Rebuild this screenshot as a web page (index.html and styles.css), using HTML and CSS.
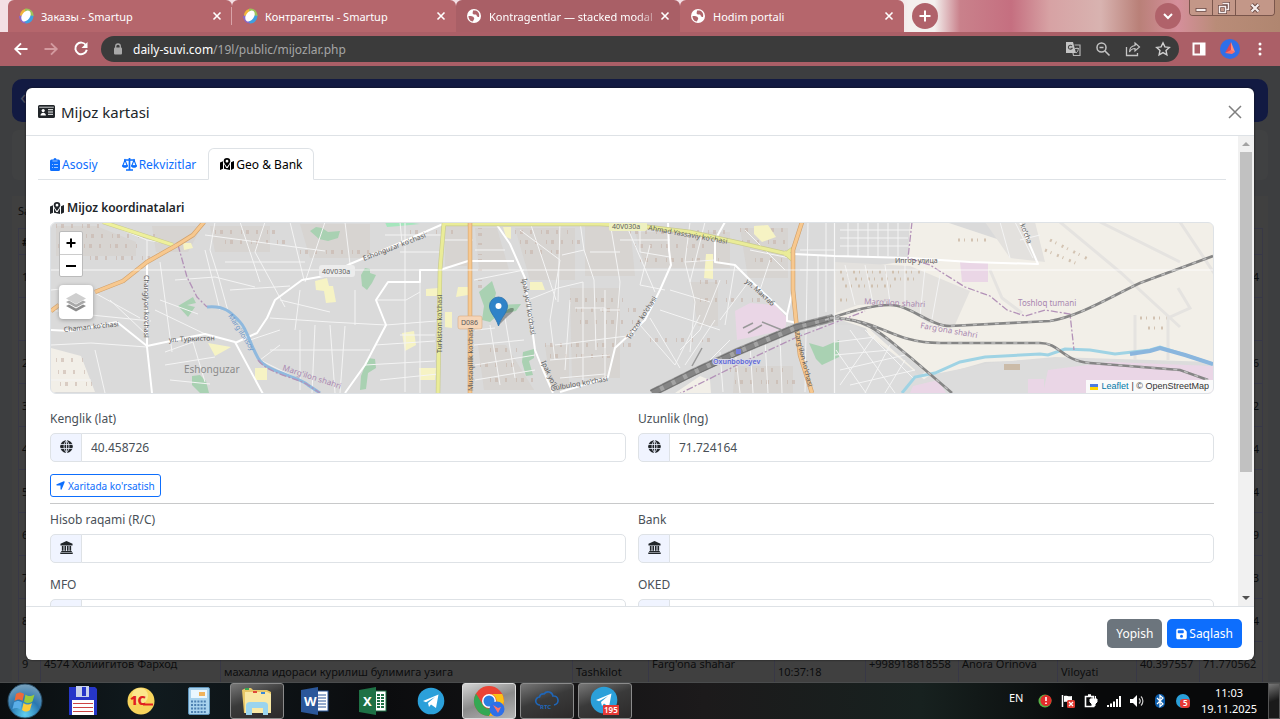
FILE: index.html
```html
<!DOCTYPE html>
<html lang="uz">
<head>
  <meta charset="UTF-8" />
  <meta name="viewport" content="width=device-width, initial-scale=1.0"/>
  <title>Mijozlar</title>
  <link rel="stylesheet" href="styles.css">
</head>
<body>

  <!-- shared icons -->
  <svg class="sprite" width="0" height="0">
    <symbol id="i-close" viewBox="0 0 10 10"><path d="M1.500 1.500l7 7M8.500 1.500l-7 7" stroke="currentColor" stroke-width="1.600" fill="none"/></symbol>
    <symbol id="i-smartup" viewBox="0 0 16 16">
      <path d="M2 9A7 7 0 0 1 7 1l4 0L5 12z" fill="#f0b53a"/>
      <path d="M1 8c0 4 3 7.500 7 7.500l2-3-6-5z" fill="#8a68c8"/>
      <path d="M8 15.500c5 0 7.500-4 7.500-8.500l-3.500-1-6 6z" fill="#3f9fe0"/>
      <path d="M7 .7c4-1 8.500 2 8.500 7.300l-4.500-1-4-4z" fill="#9cc35a"/>
      <ellipse cx="8" cy="8" rx="4" ry="6" transform="rotate(35 8 8)" fill="#fff"/>
    </symbol>
    <symbol id="i-world" viewBox="0 0 16 16">
      <circle cx="8" cy="8" r="7" fill="#fff"/>
      <path d="M2.500 8c2 0 5 0 5.500 2 1 1-1 2-1 3.500-3 0-4.500-3-4.500-5.500zM7 2.500c0 2-1 2.500 0 3.500s3 0 3.500 1 0 2 2.500 2c1-3-1-6-3.500-6.500z" fill="#b0656c"/>
    </symbol>
    <symbol id="i-map" viewBox="0 0 14 12">
      <path d="M0 4.500L3 3.300v7.500L0 12zM11 4.300L14 3v7.600L11 12zM4 6l2.200 4h1.600L10 6v6l-6-1.200z" fill="currentColor"/>
      <path d="M7 0a3.300 3.300 0 0 0-3.300 3.300C3.700 5 7 9 7 9s3.300-4 3.300-5.700A3.300 3.300 0 0 0 7 0zm0 4.600a1.400 1.400 0 1 1 0-2.800 1.400 1.400 0 0 1 0 2.800z" fill="currentColor" fill-rule="evenodd"/>
    </symbol>
    <symbol id="i-globe" viewBox="0 0 14 14">
      <circle cx="7" cy="7" r="6.800" fill="#212529"/>
      <path d="M0 4.800h14M0 9.200h14M7 0v14M7 .5C3.500 3.500 3.500 10.500 7 13.500M7 .5c3.500 3 3.500 10 0 13" stroke="#eef3ff" stroke-width=".9" fill="none"/>
    </symbol>
    <symbol id="i-bank" viewBox="0 0 14 14">
      <path d="M7 0l6.500 3v1.800H.5V3zM2 5.400h1.800v5.200H2zM4.800 5.400h1.700v5.200H4.800zM7.500 5.400h1.700v5.200H7.500zM10.200 5.400H12v5.200h-1.800zM1.300 10.900h11.400v1H1.300zM.3 12.300h13.400V14H.3z" fill="#212529"/>
    </symbol>
    <symbol id="i-telegram" viewBox="0 0 28 28">
      <circle cx="14" cy="14" r="13.300" fill="#2ba0da"/>
      <path d="M6 14L21.500 7.500 19 21l-5-3.500-2 2.500-1-4 7-6-9 5.200z" fill="#fff"/>
    </symbol>
  </svg>

  <div class="tabstrip">
    <div class="tab tab-line">
      <svg width="16" height="16"><use href="#i-smartup"/></svg>
      <span class="tab-title">Заказы - Smartup</span>
      <button class="tab-close" aria-label="Close tab"><svg width="10" height="10"><use href="#i-close"/></svg></button>
    </div>
    <div class="tab">
      <svg width="16" height="16"><use href="#i-smartup"/></svg>
      <span class="tab-title">Контрагенты - Smartup</span>
      <button class="tab-close" aria-label="Close tab"><svg width="10" height="10"><use href="#i-close"/></svg></button>
    </div>
    <div class="tab tab-active">
      <svg width="16" height="16"><use href="#i-world"/></svg>
      <span class="tab-title tab-fade">Kontragentlar — stacked modal (</span>
      <button class="tab-close" aria-label="Close tab"><svg width="10" height="10"><use href="#i-close"/></svg></button>
    </div>
    <div class="tab">
      <svg width="16" height="16"><use href="#i-world"/></svg>
      <span class="tab-title">Hodim portali</span>
      <button class="tab-close" aria-label="Close tab"><svg width="10" height="10"><use href="#i-close"/></svg></button>
    </div>
    <button class="round-btn" aria-label="New tab"><svg width="14" height="14" viewBox="0 0 14 14"><path d="M7 1.500v11M1.500 7h11" stroke="#fff" stroke-width="2"/></svg></button>
    <button class="round-btn tab-search" aria-label="Search tabs"><svg width="12" height="12" viewBox="0 0 12 12"><path d="M2 4l4 4 4-4" fill="none" stroke="#fff" stroke-width="2"/></svg></button>
    <div class="win-controls">
      <button aria-label="Minimize"><svg width="12" height="12" viewBox="0 0 12 12"><rect x="1" y="6.500" width="10" height="3" fill="#f5eded" stroke="#6b4a44" stroke-width=".8"/></svg></button>
      <button aria-label="Restore"><svg width="12" height="12" viewBox="0 0 12 12"><path d="M4.500 1.500h6v6h-2M1.500 4.500h6v6h-6z" fill="none" stroke="#6b4a44" stroke-width="3"/><path d="M4.500 1.500h6v6h-2M1.500 4.500h6v6h-6z" fill="none" stroke="#f5eded" stroke-width="1.500"/></svg></button>
      <button class="win-x" aria-label="Close"><svg width="12" height="12" viewBox="0 0 12 12"><path d="M2.500 2.500l7 7m0-7l-7 7" stroke="#6b4a44" stroke-width="4"/><path d="M2.500 2.500l7 7m0-7l-7 7" stroke="#f5eded" stroke-width="2.200"/></svg></button>
    </div>
  </div>

  <div class="toolbar">
    <button aria-label="Back"><svg width="16" height="16" viewBox="0 0 16 16"><path d="M14.500 8H2.500M8 2.300L2.300 8 8 13.700" fill="none" stroke="#fff" stroke-width="1.900"/></svg></button>
    <button aria-label="Forward"><svg width="16" height="16" viewBox="0 0 16 16"><path d="M1.500 8h12M8 2.300L13.700 8 8 13.700" fill="none" stroke="#d39a9f" stroke-width="1.900"/></svg></button>
    <button aria-label="Reload"><svg width="16" height="16" viewBox="0 0 16 16"><path d="M13 4.200A5.800 5.800 0 1 0 13.800 8.800" fill="none" stroke="#fff" stroke-width="2"/><path d="M14.500 1v6H8.500z" fill="#fff"/></svg></button>
    <div class="omnibox">
      <svg width="10" height="12" viewBox="0 0 10 12"><path d="M2.700 5V3.300a2.300 2.300 0 0 1 4.600 0V5" fill="none" stroke="#a9a9a9" stroke-width="1.300"/><rect x="1" y="4.500" width="8" height="7" rx="1" fill="#a9a9a9"/></svg>
      <button class="url">daily-suvi.com<span>/19l/public/mijozlar.php</span></button>
      <button aria-label="Translate"><svg width="16" height="16" viewBox="0 0 16 16"><path d="M1 1h7l3 11H1z" fill="#c4c4c4"/><path d="M9.500 4H15v10.500H8.500L8 12" fill="none" stroke="#b4b4b4" stroke-width="1.200"/><path d="M7 5a2 2 0 1 0 .2 2.200H5.500" fill="none" stroke="#444" stroke-width="1.100"/><path d="M10 7.500h4M12 6.500v1M11 12c1.500-1 2.200-2.500 2.300-4.300" fill="none" stroke="#b4b4b4" stroke-width="1"/></svg></button>
      <button aria-label="Zoom"><svg width="16" height="16" viewBox="0 0 16 16"><circle cx="6.500" cy="6.500" r="4.500" fill="none" stroke="#c4c4c4" stroke-width="1.500"/><path d="M10 10l4.500 4.500M4.500 6.500h4" stroke="#c4c4c4" stroke-width="1.600"/></svg></button>
      <button aria-label="Share"><svg width="16" height="16" viewBox="0 0 16 16"><path d="M1.500 6v8.500h11V12" fill="none" stroke="#c4c4c4" stroke-width="1.300"/><path d="M10 2l4.500 4-4.500 4V7.500C7 7.500 5.500 9 4.500 11c0-4 2-6 5.500-6.500z" fill="none" stroke="#c4c4c4" stroke-width="1.200"/></svg></button>
      <button aria-label="Bookmark"><svg width="16" height="16" viewBox="0 0 16 16"><path d="M8 1.800l1.900 4.100 4.400.5-3.300 3 .9 4.400L8 11.600l-3.900 2.200.9-4.400-3.300-3 4.400-.5z" fill="none" stroke="#d0d0d0" stroke-width="1.400"/></svg></button>
    </div>
    <button aria-label="Side panel"><svg width="14" height="14" viewBox="0 0 14 14"><path d="M0.500 .5h13v13H.5zM2.500 2.500v9H8v-9z" fill="#fff" fill-rule="evenodd"/></svg></button>
    <button aria-label="Profile"><svg width="20" height="20" viewBox="0 0 20 20"><circle cx="10" cy="10" r="10" fill="#2f6fe8"/><path d="M11 3l4 10-4-1z" fill="#ff8d7a"/><path d="M11 3l0 9-6 2z" fill="#d8455a"/><path d="M5 14l6-3 4 2-3 2z" fill="#ff6f61"/></svg></button>
    <button class="menu-dots" aria-label="Menu"><svg width="4" height="14" viewBox="0 0 4 14" fill="#fff"><circle cx="2" cy="2" r="1.500"/><circle cx="2" cy="7" r="1.500"/><circle cx="2" cy="12" r="1.500"/></svg></button>
  </div>

  <main class="page">
    <div class="navbar"><span>‹</span></div>
    <div class="filter-card"></div>
    <div class="list-card">
      <div class="list-title">Savdo</div>
      <table class="clients">
        <colgroup>
          <col class="c-num"><col class="c-name"><col><col class="c-type"><col class="c-city"><col class="c-time"><col class="c-phone"><col class="c-agent"><col class="c-region"><col class="c-lat"><col class="c-lat">
        </colgroup>
        <tr><th>#</th><th></th><th></th><th></th><th></th><th></th><th></th><th></th><th></th><th></th><th></th></tr>
        <tr><td>1</td><td></td><td></td><td></td><td></td><td></td><td></td><td></td><td></td><td></td><td class="r">4</td></tr>
        <tr><td></td><td></td><td></td><td></td><td></td><td></td><td></td><td></td><td></td><td></td><td></td></tr>
        <tr><td>2</td><td></td><td></td><td></td><td></td><td></td><td></td><td></td><td></td><td></td><td class="r">6</td></tr>
        <tr><td>3</td><td></td><td></td><td></td><td></td><td></td><td></td><td></td><td></td><td></td><td class="r">2</td></tr>
        <tr><td>4</td><td></td><td></td><td></td><td></td><td></td><td></td><td></td><td></td><td></td><td class="r">4</td></tr>
        <tr><td>5</td><td></td><td></td><td></td><td></td><td></td><td></td><td></td><td></td><td></td><td class="r">4</td></tr>
        <tr><td>6</td><td></td><td></td><td></td><td></td><td></td><td></td><td></td><td></td><td></td><td class="r">9</td></tr>
        <tr><td>7</td><td></td><td></td><td></td><td></td><td></td><td></td><td></td><td></td><td></td><td class="r">3</td></tr>
        <tr><td>8</td><td></td><td></td><td></td><td></td><td></td><td></td><td></td><td></td><td></td><td class="r">4</td></tr>
        <tr><td>9</td><td>4574 Холиигитов Фарход</td><td><br>махалла идораси курилиш булимига узига</td><td><br>Tashkilot</td><td>Farg'ona shahar</td><td><br>10:37:18</td><td>+998918818558</td><td>Anora Orinova</td><td><br>Viloyati</td><td>40.397557</td><td>71.770562</td></tr>
      </table>
    </div>

    <div class="modal">
      <div class="modal-header">
        <svg width="17" height="13" viewBox="0 0 17 13"><path d="M1.500 0h14A1.500 1.500 0 0 1 17 1.500v10a1.500 1.500 0 0 1-1.500 1.500h-14A1.500 1.500 0 0 1 0 11.500v-10A1.500 1.500 0 0 1 1.500 0z" fill="#212529"/><path d="M1.200 2.200h14.600" stroke="#fff" stroke-width=".8"/><circle cx="5.200" cy="5.600" r="1.600" fill="#fff"/><path d="M2.500 10.500c0-3.600 5.400-3.600 5.400 0z" fill="#fff"/><path d="M10 4.700h5M10 7h5M10 9.300h5" stroke="#fff" stroke-width="1"/></svg>
        <h5>Mijoz kartasi</h5>
        <button class="modal-close" aria-label="Yopish"><svg width="14" height="14" viewBox="0 0 14 14"><path d="M1 1l12 12M13 1L1 13" stroke="#7f7f7f" stroke-width="1.500"/></svg></button>
      </div>

      <div class="modal-main">
        <div class="modal-body">
          <nav class="nav-tabs">
            <a href="#asosiy"><svg width="10" height="13" viewBox="0 0 10 13"><path d="M1.500 1.500h2a1.500 1.500 0 0 1 3 0h2A1.500 1.500 0 0 1 10 3v8.500A1.500 1.500 0 0 1 8.500 13h-7A1.500 1.500 0 0 1 0 11.500V3a1.500 1.500 0 0 1 1.500-1.500z" fill="currentColor"/><path d="M2.500 3h5M4 6.500h4M4 9.500h4M2 6.500h1M2 9.500h1" stroke="#fff" stroke-width=".6"/></svg>Asosiy</a>
            <a href="#rekvizitlar"><svg width="15" height="13" viewBox="0 0 15 13"><path d="M7.500 0v12M2 2h11M4 12h7" stroke="currentColor" stroke-width="1.700"/><path d="M3 2L.7 8h4.600zM12 2L9.700 8h4.600z" fill="none" stroke="currentColor" stroke-width="1.100"/><path d="M0 7.200h6c0 3.500-6 3.500-6 0zM9 7.200h6c0 3.500-6 3.500-6 0z" fill="currentColor"/></svg>Rekvizitlar</a>
            <a href="#geo" class="active"><svg width="14" height="12"><use href="#i-map"/></svg>Geo &amp; Bank</a>
          </nav>

          <div class="tab-pane">
            <h6><svg width="14" height="12"><use href="#i-map"/></svg>Mijoz koordinatalari</h6>

            <div class="map">
              <svg class="map-tiles" viewBox="51 222 1162 172" preserveAspectRatio="xMidYMid slice">
                <rect x="51" y="222" width="1162" height="172" fill="#dadada"/>
                <!-- open land -->
                <g fill="#f2efe8">
                  <path d="M910 222L946 222 1000 240 1010 222H1213V366L1110 362 1040 360 985 362 940 375 905 393 898 393 925 372 905 355 880 333 835 318V272L900 262 908 256z"/>
                  <path d="M51 348l30 8 14 36H51zM675 393l25-17 10 4 1 13zM865 325l50 45-12 23-30-45z"/>
                </g>
                <g fill="#e3e1de">
                  <path d="M835 262l75 4 60 25-16 36-26-4-30-20-40 2-22 8zM985 222h50l10 40-35-4z"/>
                </g>
                <g fill="#dcdcdc">
                  <path d="M835 325l20 0 45 34 40 34H835zM905 393l25-18 60-12 65-6 158 5v31z"/>
                </g>
                <!-- built-up areas -->
                <g fill="#d3cbc5" opacity=".45">
                  <path d="M152 226h50l-14 26h-32zM210 226h60v26h-55zM300 224h70v34h-60zM445 226h22v40h-22zM475 228h22l12 42h-30zM515 228h60v52h-45zM585 226h45l5 50h-50zM570 288h50v90h-48zM545 345h24v46h-18zM635 232h95v36h-85zM740 228h48v50h-40zM735 366h58v27h-60zM690 282h28v44h-20zM478 345h28l28 45h-50zM56 226h40l40 16v14H56z"/>
                </g>
                <g stroke="#c8b5aa" stroke-width="4" stroke-dasharray="1 4 3 7 2 9" opacity=".6">
                  <path d="M56 226h50M60 236h100M58 246h80M90 258h60M300 252h90M215 232h60M225 242h60M56 360h30M58 372h30M60 384h32M410 232h50M480 228v60M515 232h55M520 242h60M525 252h40M570 300h55M576 310h60M580 322h60M545 345h90M550 356h60M490 350h30M480 365h40M490 380h45M630 232h100M635 246h70M640 260h80M650 340h60M700 300h60M740 230h50M742 242h50M755 260h30M700 282h30M730 370h55M735 382h60"/>
                </g>
                <g stroke="#cbb8a4" stroke-width="3" stroke-dasharray="2 4 1 6" opacity=".8">
                  <path d="M840 272h80M842 279h75M845 286h50M840 300h12M958 240h30M1050 240l40 20M1045 250l35 15M1140 318h30M1148 328h20"/>
                </g>
                <!-- parks -->
                <g fill="#a9d1b2">
                  <path d="M310 231l6-4 6 1 6 4 12-1-2 7-10 3-9-2zM361 275l4-7 5 1v4l6 2-4 8-5 7-5-4zM178 306l15-9 3 6-9 2 8 2-7 10zM192 376l8-1 6 6 3 12h-9l-8-8zM368 358l7 1 1 9-8 5-2 16-6 1 1-14z"/>
                  <path d="M479 292l13-11 4 12-3 12 28-1-5 7-18 4-8 7-8-2 2-14zM523 352l11-3v9l-5 3 4 14-7 1-4-14zM809 343l14 4 16-7v17l-17 8-6-6z"/>
                </g>
                <path d="M385 222h20l15 2-20 2-13 1z" fill="#a5e6bd"/>
                <!-- schools -->
                <g fill="#f6f3c4">
                  <path d="M208 343l23 4-16 9zM315 281l12-3 2 8 4 0 3 16-10 1-2-12-8-1zM183 243h8l2 5-9 2zM255 368h12v12h-12zM426 289l12-1v8h-12zM458 287h10v8l-12 2zM445 312l7 0v16l-7-1zM402 333l12-2 2 14-11 6zM419 368l17 0-1 12h-15zM530 282h12l3 8h-15zM503 227h8v12l-5-2zM754 226l14-1 8 12-14 5-8-8zM706 254h7l0 25-9-1z"/>
                </g>
                <g fill="#ead6e6">
                  <path d="M735 311l15-8 25 2 12 13-2 12-48 10zM960 262h28v20h-26zM1048 370l62-8 103 4v27H1043zM1028 379h16v14h-16zM913 386l25-6 8 13h-36z"/>
                </g>
                <!-- side streets -->
                <g fill="none" stroke="#f4f4f4" stroke-width="1">
                  <path d="M103 222l44 18 0 22M147 240l30 5M51 290l20-2M95 293l45 25M160 262l12 90M175 280l40-3 40 10M205 250l15 60M205 235l120 16M215 222l-5 28 8 25 10 36M240 222l20 60M265 222l-10 30 30 55M290 222l14 58M325 222l-20 60M345 222l5 42M400 222l2 21M225 262h80M230 290l60-4M51 310l20 3 80 8M110 300l37 35M155 310l25 12 25 12M160 300l38 14M165 352l28-10 12 40M51 345l40-2 56 4M95 350l10 43M51 380h40M165 365l50-8M170 380l40 4M270 318l60 4 56 3M280 300l50 12M300 330v60M270 350h100M315 325l-3 68M330 325l5 68M345 326l-5 67M355 290l0 35M250 340l30-10M280 345l-20 15 40 20M300 290l-5 40"/>
                  <path d="M376 300h30l14-8M386 325l50-4M400 335h35M405 222v170M420 270v123M375 345l60-4M365 365l70-4M380 380l58-6M385 235h58M400 252h40M443 240l30 0M475 250h30M474 280l50-10M474 345l50-5M475 330l20-2M475 365l60-10M490 325l10 60M505 318l10 60M475 380l60-10M528 300l30-12 25-6M520 230l40 30M531 225l25 75M560 260l-10 60 5 40M560 222l-2 80M580 222l4 28-22 5M583 282v100M584 250l10 30 2 70M555 345l80-10M550 360l60-5M570 300l-5 70M600 310h20M590 252h30M610 222l10 60-5 66M620 240h50M625 222l30 70M640 222l0 30 30 5M650 245l-10 40 25 5M575 308h30v70M605 290l0 58M560 378l45-4"/>
                  <path d="M690 222l-5 40 10 40-5 50M705 222l-15 60M685 262l30-2M720 280l-20 50-20 20M735 265l-10 60M750 280l-30 40M770 260l-10 30M745 230l40 40M790 258l-40-8M800 250h35M800 270h35M808 222l-3 170M818 255v75M826 222v90M670 290l40 12M660 310l60 20M640 325l35 40M650 318l30 50M700 315l-25 50M715 320l-30 45M730 340l-20 20M720 352l3 40M735 350l5 43M750 345l3 48M765 340l3 53M780 335l2 58"/>
                  <path d="M840 230h70M840 238h68M840 246h68M848 222v34M858 222v34M868 222v34M878 222v34M888 222v34M898 222v34M835 342l40-5M835 355l55-5M840 370l65-15M850 385l65-15M850 330l45 63M865 330l50 50M836 350l30 43M875 335l-35 50M890 345l-25 48M905 360l-20 33M1000 222l10 36M1015 222l18 36M1020 240l20-5M845 265l10 40M865 265l8 38M885 265l5 38M905 265l0 40M925 268l-5 48M940 275l-8 44"/>
                </g>
                <g fill="none" stroke="#e5e3e0" stroke-width="3">
                  <path d="M1060 222l60 50 60 55M1100 222l80 40M1180 222l40 60M990 270l12 28 20 15M1135 360v-45M1168 360v-42l22-10-12-20"/>
                </g>
                <!-- local roads -->
                <g fill="none" stroke="#fff" stroke-width="2" stroke-linejoin="round">
                  <path d="M51 330l20 1 46-9 30 24 33-7 25-5 30 8 28 52M235 343l22-10 10-15 8-18 27-20 28-5 20-11 50-21 43-19M147 262v85l5 46M403 282h-15l-12 18 10 25-21 40-20 28M400 282h20v-12h20l28-9h46"/>
                  <path d="M495 222l15 22 15 34 6 42 4 30 8 20 10 23M668 222l1 28 2 15-11 25-15 30-30 28-7 29-18 6-30 9M725 222l-10 18v22l20 3 15 15 37 35v6l11 2M787 315l6-26M793 254l42 2M835 256l75 2 60 4 68 2-18-42"/>
                </g>
                <!-- water -->
                <path d="M207 307c20-2 26 8 33 15s10 22 18 36 40 18 50 27l12 8" fill="none" stroke="#8fb9de" stroke-width="3"/>
                <path d="M902 393l13-16 20-4 25-11 25-5 55-3 8 1 17-6 25 1 25 4 35-4 10-3 25 8 28 9" fill="none" stroke="#9fd3e4" stroke-width="3"/>
                <path d="M1130 354l20-3 10-3 25 7 28 9" fill="none" stroke="#8ab6de" stroke-width="4"/>
                <!-- city borders -->
                <g fill="none" stroke="#b392b8" stroke-width="1.300" stroke-dasharray="7 2 2 2">
                  <path d="M178 245l9 32 10 20 10 10M258 360c10 14 40 18 50 25l12 8M912 222l-4 36 22 7 35 22 25 9 17 14 18 6 20-6 25 4 4 36M675 396l60-30 60-28 70-27"/>
                </g>
                <!-- main roads -->
                <g fill="none" stroke-linejoin="round">
                  <path d="M103 222l70 23" stroke="#c9cb8e" stroke-width="4"/>
                  <path d="M103 222l70 23" stroke="#eef09b" stroke-width="3"/>
                  <path d="M443 224h157l40 2 50 6 50 11 52 12M444 222l-4 48-2 123M784 252l9 8M784 255l10-7" stroke="#c9cb8e" stroke-width="4.500"/>
                  <path d="M443 224h157l40 2 50 6 50 11 52 12M444 222l-4 48-2 123M784 252l9 8M784 255l10-7" stroke="#eaec98" stroke-width="3.200"/>
                  <path d="M51 311l8-6M95 292l28-11 24-19 30-17 16-10 11-13M470 222v171M802 222l-9 28v40l4 40 3 25 12 38" stroke="#d3a26c" stroke-width="4.500"/>
                  <path d="M51 311l8-6M95 292l28-11 24-19 30-17 16-10 11-13M470 222v171M802 222l-9 28v40l4 40 3 25 12 38" stroke="#f7c88f" stroke-width="3.200"/>
                </g>
                <!-- railway -->
                <g fill="none">
                  <path d="M652 393l40-20 45-21 60-25 36-9" stroke="#a4a4a4" stroke-width="8"/>
                  <path d="M652 393l40-20 45-21 60-25 36-9" stroke="#858585" stroke-width="7" stroke-dasharray="9 4"/>
                  <path d="M650 391l40-20 45-21 60-25 38-9M655 395l40-20 45-21 60-25 33-9" stroke="#6f6f6f" stroke-width="1"/>
                  <path d="M825 320c25-8 45-15 65-15s40 21 60 21l100-5c30-5 60-24 90-38l73-27M830 318c50 0 60 25 110 25h100c20 0 22 18 50 20l90 7 28 10M835 318c35 2 45 15 75 39l42 36" stroke="#858585" stroke-width="2.600"/>
                  <path d="M825 320c25-8 45-15 65-15s40 21 60 21l100-5c30-5 60-24 90-38l73-27M830 318c50 0 60 25 110 25h100c20 0 22 18 50 20l90 7 28 10M835 318c35 2 45 15 75 39l42 36" stroke="#bdbdbd" stroke-width="1.400" stroke-dasharray="4 7"/>
                  <path d="M743 328l10-5M748 333l14-8M762 322l20 8M692 366l10-18" stroke="#999" stroke-width="1.500"/>
                </g>
                <!-- tile seams -->
                <path d="M51 270h1162M834.500 222v171" stroke="#fff" stroke-width="1.200" opacity=".75"/>
                <rect x="1004" y="364" width="16" height="6" fill="#cbbba8"/>
                <rect x="736" y="349" width="5" height="5" fill="#7780dd"/>
                <!-- names -->
                <g class="map-names">
                  <rect x="319" y="265" width="36" height="12" rx="3" fill="#ececec"/><text x="322" y="274">40V030a</text>
                  <rect x="609" y="222" width="38" height="9" rx="2" fill="#eef0c0"/><text x="612" y="229">40V030a</text>
                  <rect x="458" y="316" width="24" height="13" rx="2" fill="#f5d5b7" stroke="#d9ad84" stroke-width=".6"/><text x="461" y="325">D086</text>
                  <text transform="translate(364 261) rotate(-21)">Eshonguzar ko'chasi</text>
                  <text transform="translate(144 275) rotate(90)">Changiyon ko'chasi</text>
                  <text transform="translate(64 332) rotate(-6)">Chaman ko'chasi</text>
                  <text transform="translate(169 342) rotate(-2)">ул. Туркистон</text>
                  <text transform="translate(648 230) rotate(10)">Ahmad Yassaviy ko'chasi</text>
                  <text transform="translate(442 353) rotate(-90)">Turkiston ko'chasi</text>
                  <text transform="translate(473 391) rotate(-90)">Mustaqillik ko'chasi</text>
                  <text transform="translate(522 279) rotate(81)">Ipak yo'li ko'chasi</text>
                  <text transform="translate(541 362) rotate(65)">Ipak yo'li</text>
                  <text transform="translate(630 340) rotate(-57)">To'tzor ko'chasi</text>
                  <text transform="translate(551 391) rotate(-10)">Gulbuloq ko'chasi</text>
                  <text transform="translate(745 282) rotate(42)">ул. Мактаб</text>
                  <text transform="translate(794 330) rotate(76)">Marg'ilon ko'chasi</text>
                  <text x="895" y="263">Ипгор улица</text>
                  <text transform="translate(1020 225) rotate(68)">ko'cha</text>
                  <text class="n-water" transform="translate(228 316) rotate(57)">Marg'ilonsoy</text>
                  <text class="n-city" transform="translate(282 370) rotate(18)">Marg'ilon shahri</text>
                  <text class="n-city" transform="translate(864 304) rotate(3)">Marg'ilon shahri</text>
                  <text class="n-city" transform="translate(920 328) rotate(10)">Farg'ona shahri</text>
                  <text class="n-city" transform="translate(1018 306)">Toshloq tumani</text>
                  <text class="n-area" x="184" y="373">Eshonguzar</text>
                  <text class="n-station" x="713" y="364">Oxunboboyev</text>
                </g>
                <!-- marker -->
                <path d="M499 325l9-9c5-3 8-8 4-8s-10 5-13 17z" fill="#000" opacity=".3"/>
                <path d="M498.500 326C496 317 489.500 313 489.500 306a9 9 0 0 1 18 0c0 7-6.500 11-9 20z" fill="#2f83c8" stroke="#2a71ad" stroke-width=".8"/>
                <circle cx="498.500" cy="306" r="3" fill="#fff"/>
              </svg>
              <div class="map-controls">
                <div class="map-zoom">
                  <button aria-label="Zoom in"><svg width="10" height="10" viewBox="0 0 10 10"><path d="M5 .5v9M.5 5h9" stroke="#000" stroke-width="2"/></svg></button>
                  <button aria-label="Zoom out"><svg width="10" height="10" viewBox="0 0 10 10"><path d="M0 5h10" stroke="#000" stroke-width="2"/></svg></button>
                </div>
                <button class="map-layers" aria-label="Layers"><svg width="20" height="20" viewBox="0 0 20 20"><path d="M0 14l10 5.500L20 14l-3-1.500-7 4-7-4z" fill="#8c8c8c"/><path d="M0 10l10 5.500L20 10l-3-1.500-7 4-7-4z" fill="#a8a8a8"/><path d="M10 1L0 6.500 10 12l10-5.500z" fill="#cfcfcf"/></svg></button>
              </div>
              <div class="map-credit"><svg width="8" height="6" viewBox="0 0 8 6"><path d="M0 0h8v3H0z" fill="#4c7be1"/><path d="M0 3h8v3H0z" fill="#ffd500"/></svg> <a href="#leaflet">Leaflet</a> | © OpenStreetMap</div>
            </div>

            <div class="form-row">
              <div class="field">
                <label for="lat">Kenglik (lat)</label>
                <div class="input-group"><span><svg width="13" height="13"><use href="#i-globe"/></svg></span><input id="lat" type="text" value="40.458726"></div>
              </div>
              <div class="field">
                <label for="lng">Uzunlik (lng)</label>
                <div class="input-group"><span><svg width="13" height="13"><use href="#i-globe"/></svg></span><input id="lng" type="text" value="71.724164"></div>
              </div>
            </div>

            <button class="btn-outline"><svg width="9" height="9" viewBox="0 32 448 448"><path d="M429.600 92.100c4.900-11.900 2.100-25.600-7-34.700s-22.800-11.900-34.700-7l-352 144c-14.200 5.800-22.200 20.800-19.300 35.800s16.100 25.800 31.400 25.800H224V432c0 15.300 10.800 28.400 25.800 31.400s30-5.100 35.800-19.300l144-352z" fill="currentColor"/></svg>Xaritada ko'rsatish</button>
            <hr>

            <div class="form-row">
              <div class="field">
                <label for="hisob">Hisob raqami (R/C)</label>
                <div class="input-group"><span><svg width="13" height="13"><use href="#i-bank"/></svg></span><input id="hisob" type="text"></div>
              </div>
              <div class="field">
                <label for="bank">Bank</label>
                <div class="input-group"><span><svg width="13" height="13"><use href="#i-bank"/></svg></span><input id="bank" type="text"></div>
              </div>
              <div class="field">
                <label for="mfo">MFO</label>
                <div class="input-group"><span></span><input id="mfo" type="text"></div>
              </div>
              <div class="field">
                <label for="oked">OKED</label>
                <div class="input-group"><span></span><input id="oked" type="text"></div>
              </div>
            </div>
          </div>
        </div>
        <div class="scrollbar">
          <svg width="8" height="16" viewBox="0 0 8 16"><path d="M0 10l4-4 4 4z" fill="#a3a3a3"/></svg>
          <div class="scroll-thumb"></div>
          <svg class="scroll-down" width="8" height="16" viewBox="0 0 8 16"><path d="M0 6l4 4 4-4z" fill="#505050"/></svg>
        </div>
      </div>

      <div class="modal-footer">
        <button class="btn btn-secondary">Yopish</button>
        <button class="btn btn-primary"><svg width="11" height="12" viewBox="0 0 448 512"><path d="M64 32C28.700 32 0 60.700 0 96V416c0 35.300 28.700 64 64 64H384c35.300 0 64-28.700 64-64V173.300c0-17-6.700-33.300-18.700-45.300L352 50.700C340 38.700 323.700 32 306.700 32H64zm0 96c0-17.700 14.300-32 32-32H288c17.700 0 32 14.300 32 32v64c0 17.700-14.300 32-32 32H96c-17.700 0-32-14.300-32-32V128zM224 288a64 64 0 1 1 0 128 64 64 0 1 1 0-128z" fill="#fff" fill-rule="evenodd"/></svg>Saqlash</button>
      </div>
    </div>
  </main>

  <div class="taskbar">
    <button class="start" aria-label="Start"><svg width="36" height="36" viewBox="0 0 36 36">
      <defs><radialGradient id="orb" cx=".5" cy=".9" r=".9"><stop offset="0" stop-color="#5fd0f2"/><stop offset=".5" stop-color="#2a77b0"/><stop offset="1" stop-color="#7ba3bd"/></radialGradient></defs>
      <circle cx="18" cy="18" r="17" fill="url(#orb)" stroke="#254a63"/>
      <path d="M9 11c3-2 5-2 8 0l-1.500 7c-3-2-5-2-8 0z" fill="#ee6a3a"/><path d="M18.500 11.500c3 2 5 2 9 0l-2 7c-3 2-6 2-8.500 0z" fill="#9aca3c"/><path d="M7 19.500c3-2 5-2 8 0l-1.500 7c-3-2-5-2-8-.5z" fill="#5aaee8"/><path d="M16.500 20c3 2 5 2 8.500 0l-2 7c-3 2-5 2-8 0z" fill="#fccb3a"/></svg></button>
    <button class="task" aria-label="Total Commander"><svg width="30" height="30" viewBox="0 0 30 30"><path d="M1 1h26l2 2v26H1z" fill="#2636c8"/><rect x="8" y="0" width="13" height="11" fill="#c9d2ea"/><rect x="14" y="1" width="4" height="9" fill="#2636c8"/><rect x="4" y="14" width="22" height="15" fill="#fff"/><path d="M5 17.500h20M5 21.500h20M5 25.500h20" stroke="#c44" stroke-width="1"/></svg></button>
    <button class="task" aria-label="1C"><svg width="28" height="28" viewBox="0 0 28 28"><circle cx="14" cy="14" r="13.500" fill="#f7d45c"/><circle cx="13" cy="9" r="8" fill="#fdeea0" opacity=".7"/><text x="3" y="18" class="ic-1c">1C</text><path d="M16 17.500h10" stroke="#e02020" stroke-width="2"/></svg></button>
    <button class="task" aria-label="Calculator"><svg width="22" height="28" viewBox="0 0 22 28"><rect x=".5" y=".5" width="21" height="27" rx="1.500" fill="#a9d3ee" stroke="#5d92b8"/><rect x="3" y="3" width="16" height="8" fill="#eaf7ff"/><rect x="11" y="5" width="6" height="4" fill="#f0b35c"/><path d="M3 14.500h16M3 18h16M3 21.500h16M3 25h16" stroke="#4c7fb0" stroke-width="2.200" stroke-dasharray="2 1.200"/></svg></button>
    <button class="task task-open" aria-label="Explorer"><svg width="32" height="28" viewBox="0 0 32 28"><path d="M1 3l4-2h5l2 2h14l4 2v21H3z" fill="#e8c868"/><path d="M4 5h22l4 2v19H4z" fill="#f9e8a4"/><path d="M4 1h4v2H4z" fill="#3aa655"/><path d="M12 4h4v2h-4z" fill="#e04a3a"/><path d="M20 5h4v2h-4z" fill="#3a88d8"/><path d="M5 28V18c0-2 2-3 4-3h14c2 0 4 1 4 3v10h-5v-7H11v7z" fill="#9ad4ee"/></svg></button>
    <button class="task" aria-label="Word"><svg width="28" height="28" viewBox="0 0 28 28"><rect x="14" y="4" width="13" height="20" fill="#fff" stroke="#2b579a"/><path d="M17 8h8M17 11h8M17 14h8M17 17h8M17 20h8" stroke="#2b579a"/><path d="M0 3l17-3v28L0 25z" fill="#2b579a"/><text x="3" y="19" class="ic-office">W</text></svg></button>
    <button class="task" aria-label="Excel"><svg width="28" height="28" viewBox="0 0 28 28"><rect x="14" y="4" width="13" height="20" fill="#fff" stroke="#1e7145"/><path d="M18 8h7M18 11h7M18 14h7M18 17h7M18 20h7" stroke="#1e7145" stroke-width="2" stroke-dasharray="3 1"/><path d="M0 3l17-3v28L0 25z" fill="#1e7145"/><text x="4" y="19" class="ic-office">X</text></svg></button>
    <button class="task" aria-label="Telegram"><svg width="28" height="28"><use href="#i-telegram"/></svg></button>
    <button class="task task-open task-current" aria-label="Chrome"><svg width="32" height="32" viewBox="0 0 32 32"><circle cx="16" cy="16" r="15" fill="#ea4335"/><path d="M3 8.500A15 15 0 0 0 16 31l6.500-11.500A7 7 0 0 1 10 20z" fill="#34a853"/><path d="M16 9h13.200A15 15 0 0 1 16 31l6.500-11.500A7 7 0 0 0 16 9z" fill="#fbc116"/><circle cx="16" cy="16" r="7" fill="#fff"/><circle cx="16" cy="16" r="5.500" fill="#2a7de1"/><circle cx="24" cy="24" r="7.500" fill="#2f6fe8"/><path d="M20 20l5 3 3-1-3 6z" fill="#ff7468"/></svg></button>
    <button class="task task-open" aria-label="RTC"><svg width="24" height="20" viewBox="0 0 24 20"><path d="M5 14a4 4 0 0 1-.5-8A4 4 0 0 1 9 3a5 5 0 0 1 9 2 4.500 4.500 0 0 1 1 9" fill="none" stroke="#1f66b8" stroke-width="1.600"/><text x="5" y="18" class="ic-cloud">RTC</text></svg></button>
    <button class="task task-open" aria-label="Telegram"><svg width="30" height="30" viewBox="0 0 30 30"><use href="#i-telegram" width="28" height="28"/><rect x="13" y="19" width="16" height="10" fill="#e53935"/><text x="14" y="27" class="ic-badge">195</text></svg></button>
    <div class="tray">
      <span class="lang">EN</span>
      <svg width="14" height="14" viewBox="0 0 14 14"><circle cx="7" cy="7" r="6.500" fill="#59b347"/><circle cx="8" cy="6.500" r="5.500" fill="#e22b2b"/><path d="M8 3v4M8 8.500v1.500" stroke="#fff" stroke-width="1.600"/></svg>
      <svg width="14" height="14" viewBox="0 0 14 14"><path d="M1.500 1v12" stroke="#fff" stroke-width="1.500"/><path d="M3 2c3-1 4 1 8 0v6c-4 1-5-1-8 0z" fill="#fff"/><rect x="6" y="6" width="8" height="8" rx="1.500" fill="#e03a30"/><path d="M8 8l4 4m0-4l-4 4" stroke="#fff" stroke-width="1.300"/></svg>
      <svg width="14" height="14" viewBox="0 0 14 14"><path d="M1.500 2.500h8v10h-8zM4 1h3" fill="none" stroke="#fff" stroke-width="1.600"/><path d="M6 5h7v3l-2 2v2H8v-2L6 8zM8 2v3M11.500 2v3" fill="#fff" stroke="#fff"/></svg>
      <svg width="14" height="14" viewBox="0 0 14 14"><path d="M1 11v2M4 9.500V13M7 7.500V13M10 5v8M13 2v11" stroke="#fff" stroke-width="2"/></svg>
      <svg width="14" height="14" viewBox="0 0 14 14"><path d="M0 5h3l4-4v12L3 9H0z" fill="#fff"/><path d="M9 4.500c1.500 1.500 1.500 3.500 0 5M11 2.500c2.500 2.500 2.500 6.500 0 9" fill="none" stroke="#ccc" stroke-width="1.200"/></svg>
      <svg width="14" height="14" viewBox="0 0 14 14"><rect x="2" width="10" height="14" rx="5" fill="#0b5cab"/><path d="M4 4l6 6-3 2.500v-11L10 4l-6 6" fill="none" stroke="#fff" stroke-width="1.200"/></svg>
      <svg width="14" height="14" viewBox="0 0 14 14"><circle cx="7" cy="7" r="7" fill="#2ba0da"/><rect x="4" y="5" width="10" height="9" rx="3" fill="#e53935"/><text x="7" y="12" class="ic-badge">5</text></svg>
    </div>
    <div class="clock">11:03<br>19.11.2025</div>
    <button class="show-desktop" aria-label="Show desktop"></button>
  </div>

</body>
</html>
```
FILE: styles.css
```css
* {
  box-sizing: border-box;
}
body {
  margin: 0;
  height: 100vh;
  display: flex;
  flex-direction: column;
  overflow: hidden;
  font-family: "Noto Sans", "Open Sans", sans-serif;
  font-size: 12px;
  color: #212529;
}
button {
  border: none;
  background: none;
  padding: 0;
  font: inherit;
  color: inherit;
  display: flex;
  align-items: center;
  justify-content: center;
}
svg {
  display: block;
  flex: none;
}
.sprite {
  position: absolute;
}

/* browser tabs */
.tabstrip {
  height: 32px;
  flex: none;
  display: flex;
  padding-left: 8px;
  background: linear-gradient(90deg, #f3dfe4 0, #f3dfe4 70%, #f4f0ee 71%, #f4f0ee 73%, #c9818b 75%, #c56f80 79%, #d7a2a4 82%, #d8b3b0 86%, #b98078 89%, #d58f9b 92%, #b98c78 95%, #b08670 100%);
  color: #fff;
  font-size: 11px;
}
.tab {
  width: 224px;
  display: flex;
  align-items: center;
  gap: 7px;
  padding: 0 9px 0 10px;
  background: #b5666c;
  border-radius: 6px 6px 0 0;
}
.tab-line {
  background: linear-gradient(#d9a3a8, #d9a3a8) right center / 1px 18px no-repeat #b5666c;
}
.tab-active {
  background: #a95f66;
}
.tab-title {
  flex: 1;
  min-width: 0;
  white-space: nowrap;
}
.tab-fade {
  mask-image: linear-gradient(90deg, #000 90%, #0006);
}
.tab-close {
  width: 12px;
  height: 12px;
}
.round-btn {
  width: 26px;
  height: 26px;
  border-radius: 50%;
  background: #b0626a;
  margin: 3px 0 0 8px;
}
.tab-search {
  margin-left: auto;
}
.win-controls {
  display: flex;
  height: 16px;
  margin: 0 5px 0 8px;
  border: 1px solid #7a564c;
  border-top: none;
  border-radius: 0 0 4px 4px;
  overflow: hidden;
}
.win-controls button {
  width: 23px;
  background: #c39788;
  border-right: 1px solid #7a564c;
}
.win-controls .win-x {
  width: 38px;
  border-right: none;
}

/* browser toolbar */
.toolbar {
  height: 34px;
  flex: none;
  display: flex;
  align-items: center;
  gap: 14px;
  padding: 0 18px 0 13px;
  background: #ab5f67;
}
.omnibox {
  flex: 1;
  height: 26px;
  display: flex;
  align-items: center;
  gap: 14px;
  padding: 0 8px 0 12px;
  margin: 0 -1px 0 -2px;
  border-radius: 13px;
  background: #3b3b3b;
}
.omnibox .url {
  margin-right: auto;
  margin-left: -4px;
  color: #fff;
  font-size: 12px;
}
.url span {
  color: #a6a6a6;
}
.menu-dots {
  margin-left: 4px;
}

/* page under the dialog */
.page {
  flex: 1;
  min-height: 0;
  position: relative;
  overflow: hidden;
  padding: 13px 12px 0;
  background: #3d3e40;
  color: #0c0d0e;
}
.navbar {
  height: 43px;
  padding: 6px 8px;
  border-radius: 10px;
  background: #121a42;
  color: #4a4c5c;
  font-size: 20px;
  line-height: 24px;
}
.filter-card {
  height: 50px;
  margin: 8px 0 16px;
  border-radius: 6px;
  background: #404142;
}
.list-card {
  padding: 6px 5px 0 6px;
  background: #404040;
  font-size: 11px;
}
.list-title {
  line-height: 18px;
  margin-bottom: 8px;
}
.clients {
  width: 100%;
  table-layout: fixed;
  border-collapse: collapse;
}
.clients tr {
  height: 43px;
}
.clients tr:first-child {
  height: 26px;
}
.clients td,
.clients th {
  padding: 0 3px;
  border: 1px solid #383846;
  text-align: left;
  line-height: 17px;
  white-space: nowrap;
}
.clients .r {
  text-align: right;
}
.c-num { width: 22px; }
.c-name { width: 180px; }
.c-type { width: 76px; }
.c-city { width: 126px; }
.c-time { width: 91px; }
.c-phone { width: 93px; }
.c-agent { width: 99px; }
.c-region { width: 79px; }
.c-lat { width: 63px; }

/* dialog */
.modal {
  position: absolute;
  top: 22px;
  right: 26px;
  bottom: 22px;
  left: 26px;
  display: flex;
  flex-direction: column;
  background: #fff;
  border-radius: 6px;
  box-shadow: 0 0 2px #111;
  color: #212529;
}
.modal-header {
  height: 48px;
  flex: none;
  display: flex;
  align-items: center;
  gap: 6px;
  padding: 0 12px;
  border-bottom: 1px solid #dee2e6;
}
.modal-header h5 {
  margin: 0;
  font-size: 15px;
  font-weight: 400;
}
.modal-close {
  margin-left: auto;
}
.modal-main {
  flex: 1;
  min-height: 0;
  display: flex;
}
.modal-body {
  flex: 1;
  min-width: 0;
  overflow: hidden;
  padding: 12px;
}
.scrollbar {
  width: 16px;
  display: flex;
  flex-direction: column;
  align-items: center;
  background: #f1f1f1;
}
.scroll-thumb {
  width: 12px;
  height: 68%;
  background: #c1c1c1;
}
.scroll-down {
  margin-top: auto;
}
.nav-tabs {
  height: 32px;
  display: flex;
  border-bottom: 1px solid #dee2e6;
}
.nav-tabs a {
  height: 32px;
  display: flex;
  align-items: center;
  gap: 2px;
  padding: 0 11px;
  border: 1px solid transparent;
  border-radius: 6px 6px 0 0;
  color: #0d6efd;
  text-decoration: none;
}
.nav-tabs .active {
  color: #000;
  background: #fff;
  border-color: #dee2e6 #dee2e6 #fff;
}
.tab-pane {
  padding: 19px 12px 0;
}
.tab-pane h6 {
  display: flex;
  align-items: center;
  gap: 3px;
  margin: 0 0 5px;
  font-size: 12px;
  line-height: 18px;
  font-weight: 600;
}

/* map */
.map {
  position: relative;
  height: 172px;
  border: 1px solid #dee2e6;
  border-radius: 6px;
  overflow: hidden;
}
.map-tiles {
  width: 100%;
  height: 100%;
}
.map-names {
  font-size: 7px;
  fill: #5c5c5c;
}
.n-water { fill: #6a96c8; }
.n-city { fill: #a987b0; font-size: 8px; }
.n-area { fill: #8a8a8a; font-size: 10px; }
.n-station {
  fill: #5c66d8;
  font-weight: 600;
  stroke: #d8d8e4;
  stroke-width: 2px;
  paint-order: stroke;
}
.map-controls {
  position: absolute;
  top: 8px;
  left: 8px;
}
.map-zoom {
  width: 24px;
  border: 1px solid #bbb;
  border-radius: 2px;
  background: #fff;
}
.map-zoom button {
  width: 100%;
  height: 22px;
}
.map-zoom button + button {
  border-top: 1px solid #ccc;
}
.map-layers {
  width: 34px;
  height: 34px;
  margin-top: 8px;
  border-radius: 4px;
  background: #fff;
  box-shadow: 0 1px 4px #999;
}
.map-credit {
  position: absolute;
  right: 0;
  bottom: 0;
  display: flex;
  align-items: center;
  gap: 3px;
  padding: 0 4px;
  background: #fafafa;
  font: 9px/13px "Liberation Sans", sans-serif;
  color: #333;
}
.map-credit a {
  color: #0078a8;
  text-decoration: none;
}

/* form */
.form-row {
  display: grid;
  grid-template-columns: 1fr 1fr;
  gap: 13px 12px;
  margin-top: 16px;
}
.field label {
  display: block;
  margin-bottom: 5px;
  line-height: 18px;
  color: #495057;
}
.input-group {
  display: flex;
  height: 29px;
}
.input-group span {
  width: 32px;
  display: flex;
  justify-content: center;
  padding-top: 6px;
  border: 1px solid #dee2e6;
  border-radius: 5px 0 0 5px;
  background: #f0f4ff;
}
.input-group input {
  flex: 1;
  min-width: 0;
  margin-left: -1px;
  padding: 0 9px;
  border: 1px solid #dee2e6;
  border-radius: 0 5px 5px 0;
  font: inherit;
  color: #495057;
}
.btn-outline {
  height: 23px;
  gap: 3px;
  margin-top: 12px;
  padding: 0 5px;
  border: 1px solid #0d6efd;
  border-radius: 3px;
  color: #0d6efd;
  font-size: 10px;
}
hr {
  margin: 6px 0 0;
  border: none;
  border-top: 1px solid #c8c9ca;
}
hr + .form-row {
  margin-top: 7px;
}

.modal-footer {
  height: 54px;
  flex: none;
  display: flex;
  align-items: center;
  justify-content: flex-end;
  gap: 5px;
  padding: 0 12px;
  border-top: 1px solid #dee2e6;
}
.btn {
  height: 29px;
  gap: 2px;
  padding: 0 9px;
  border-radius: 5px;
  color: #fff;
}
.btn-secondary { background: #6c757d; }
.btn-primary { background: #0d6efd; }

/* windows taskbar */
.taskbar {
  height: 37px;
  flex: none;
  display: flex;
  gap: 4px;
  padding-left: 7px;
  background: linear-gradient(90deg, #0a0d0f, #101a1e 12%, #0b0c0e 30%, #1c1a1b 55%, #17211f 72%, #08090a 85%);
  border-top: 1px solid #4a4c4d;
  color: #fff;
}
.start {
  width: 36px;
  margin-right: 9px;
}
.task {
  width: 54px;
  border-radius: 3px;
}
.task-open {
  border: 1px solid #8b8b8b;
  background: linear-gradient(160deg, #777, #3a3a3a 45%, #2c2a2a);
}
.task-current {
  border-color: #ddd;
  background: linear-gradient(160deg, #d5d5d5, #8a8a8a 50%, #b5b5b5);
}
.tray {
  margin-left: auto;
  display: flex;
  align-items: center;
  gap: 9px;
}
.lang {
  width: 20px;
  font-size: 11px;
  line-height: 24px;
  align-self: flex-start;
  margin-top: 3px;
}
.clock {
  width: 70px;
  text-align: center;
  font-size: 11px;
  line-height: 16px;
  padding-top: 2px;
}
.show-desktop {
  width: 12px;
  border: 1px solid #555;
  background: linear-gradient(160deg, #777, #1a1a1a 50%);
}
.ic-1c { font-size: 13px; font-weight: 900; fill: #e02020; }
.ic-office { font-size: 13px; font-weight: 700; fill: #fff; }
.ic-cloud { font-size: 6px; font-weight: 700; fill: #1f66b8; }
.ic-badge { font-size: 8px; font-weight: 600; fill: #fff; }
```
